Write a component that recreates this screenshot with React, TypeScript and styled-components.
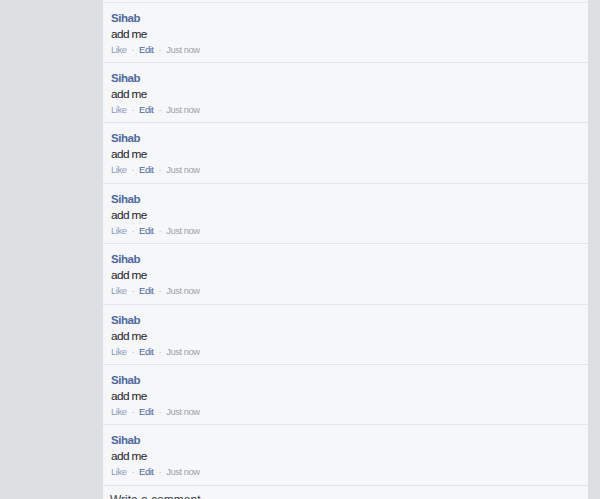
import React from "react";
import styled, { createGlobalStyle } from "styled-components";

const Global = createGlobalStyle`
  html, body {
    margin: 0;
    padding: 0;
    background: #dddfe3;
    overflow: hidden;
  }
  body {
    font-family: "Liberation Sans", Arial, Helvetica, sans-serif;
  }
`;

const Page = styled.div`
  width: 600px;
  height: 499px;
  display: flex;
  padding-left: 103px;
  box-sizing: border-box;
`;

const Panel = styled.div`
  width: 485px;
  background: #f6f7f9;
  padding-top: 2px;
  display: flex;
  flex-direction: column;
`;

const Row = styled.div<{ $first?: boolean }>`
  box-sizing: border-box;
  height: ${(p) => (p.$first ? "61px" : "60.375px")};
  border-top: ${(p) => (p.$first ? "1px solid #e5e6e9" : "0")};
  border-bottom: 1px solid #e3e4e8;
  padding: 8px 8px 0 8px;
  display: flex;
  flex-direction: column;
  flex-shrink: 0;
`;

const Name = styled.a`
  font-size: 11.5px;
  font-weight: bold;
  line-height: 15px;
  letter-spacing: -0.45px;
  color: #4b67a1;
  text-decoration: none;
`;

const Body = styled.div`
  font-size: 11.8px;
  line-height: 16px;
  letter-spacing: -0.6px;
  color: #1d2129;
`;

const Actions = styled.div`
  margin-top: 1px;
  font-size: 9.4px;
  line-height: 14px;
  letter-spacing: -0.45px;
  display: flex;
  align-items: center;
`;

const Action = styled.span<{ $tone: "like" | "edit" | "time" }>`
  color: ${(p) =>
    p.$tone === "like" ? "#8d9bc0" : p.$tone === "edit" ? "#4b67a1" : "#9ea1a7"};
`;

const Dot = styled.span`
  color: #b4b7bc;
  margin: 0 5px;
`;

const Composer = styled.div`
  padding: 6px 7px 0 7px;
  font-size: 12px;
  line-height: 16px;
  color: #3b3f45;
`;

const comments = Array.from({ length: 8 }, (_, i) => i);

export default function App() {
  return (
    <>
      <Global />
      <Page>
        <Panel>
          {comments.map((i) => (
            <Row key={i} $first={i === 0}>
              <Name href="#">Sihab</Name>
              <Body>add me</Body>
              <Actions>
                <Action $tone="like">Like</Action>
                <Dot>·</Dot>
                <Action $tone="edit">Edit</Action>
                <Dot>·</Dot>
                <Action $tone="time">Just now</Action>
              </Actions>
            </Row>
          ))}
          <Composer>Write a comment...</Composer>
        </Panel>
      </Page>
    </>
  );
}
